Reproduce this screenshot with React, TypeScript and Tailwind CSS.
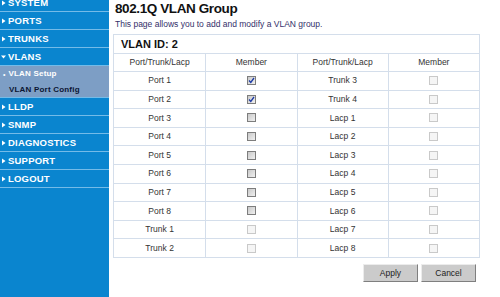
import React from 'react';

const font = { fontFamily: '"Liberation Sans", Arial, sans-serif' };

type MenuItem = { label: string; open?: boolean };

const topItems: MenuItem[] = [
  { label: 'SYSTEM' },
  { label: 'PORTS' },
  { label: 'TRUNKS' },
  { label: 'VLANS', open: true },
];

const bottomItems: MenuItem[] = [
  { label: 'LLDP' },
  { label: 'SNMP' },
  { label: 'DIAGNOSTICS' },
  { label: 'SUPPORT' },
  { label: 'LOGOUT' },
];

const rows: [string, 'on' | 'off' | 'dis', string][] = [
  ['Port 1', 'on', 'Trunk 3'],
  ['Port 2', 'on', 'Trunk 4'],
  ['Port 3', 'off', 'Lacp 1'],
  ['Port 4', 'off', 'Lacp 2'],
  ['Port 5', 'off', 'Lacp 3'],
  ['Port 6', 'off', 'Lacp 4'],
  ['Port 7', 'off', 'Lacp 5'],
  ['Port 8', 'off', 'Lacp 6'],
  ['Trunk 1', 'dis', 'Lacp 7'],
  ['Trunk 2', 'dis', 'Lacp 8'],
];

function Arrow({ open }: { open?: boolean }) {
  return (
    <svg width="5" height="6" viewBox="0 0 5 6" className="shrink-0">
      {open ? <polygon points="0,1.5 5,1.5 2.5,4.5" fill="#fff" /> : <polygon points="1,0.5 4.5,3 1,5.5" fill="#fff" />}
    </svg>
  );
}

function NavRow({ item }: { item: MenuItem }) {
  return (
    <div className="h-[18px] border-b border-[#74bbe8] flex items-center gap-[2px] pl-[1px]">
      <Arrow open={item.open} />
      <span className="text-[9.5px] font-bold text-white leading-none tracking-[0.2px]">{item.label}</span>
    </div>
  );
}

function Checkbox({ state }: { state: 'on' | 'off' | 'dis' }) {
  if (state === 'dis') {
    return <span className="inline-block w-[9px] h-[9px] border border-[#c9c9c9] bg-[#f5f5f5]" />;
  }
  return (
    <span className="inline-flex items-center justify-center w-[9px] h-[9px] border border-[#7d7d7d] bg-gradient-to-br from-[#c9c9c9] to-[#f0f0f0]">
      {state === 'on' && (
        <svg width="7" height="7" viewBox="0 0 7 7">
          <path d="M1 3.5 L2.8 5.5 L6 1" stroke="#1c3aa6" strokeWidth="1.3" fill="none" />
        </svg>
      )}
    </span>
  );
}

export default function App() {
  return (
    <div className="flex w-[500px] h-[297px] overflow-hidden bg-white" style={font}>
      {/* Sidebar, scrolled a little so SYSTEM is cut at the top */}
      <aside className="w-[109px] shrink-0 bg-[#0a85cf] overflow-hidden">
        <div className="-mt-[6px]">
          {topItems.map((it) => (
            <NavRow key={it.label} item={it} />
          ))}
          <div className="bg-[#7d9ec5] border-b border-[#74bbe8]">
            <div className="h-[16px] flex items-center pl-[3px] gap-[3px]">
              <span className="text-white text-[7px] leading-none">•</span>
              <span className="text-[8px] font-bold text-white leading-none tracking-[0.2px]">VLAN Setup</span>
            </div>
            <div className="h-[15px] flex items-center pl-[9px]">
              <span className="text-[8px] font-bold text-[#0b1533] leading-none tracking-[0.2px]">VLAN Port Config</span>
            </div>
          </div>
          {bottomItems.map((it) => (
            <NavRow key={it.label} item={it} />
          ))}
        </div>
      </aside>

      {/* Content */}
      <main className="w-[371px] pl-[4px] pt-[1px]">
        <h1 className="text-[13.5px] font-bold text-[#111] leading-[16px] tracking-[-0.4px] pl-[2px]">802.1Q VLAN Group</h1>
        <p className="text-[8.5px] text-[#34306a] leading-[12px] pl-[2px] mt-[1px]">
          This page allows you to add and modify a VLAN group.
        </p>

        <div className="mt-[4px] border border-[#d4deeb] text-[#333]">
          <div className="h-[18px] flex items-center pl-[7px] text-[11px] font-bold text-[#111]">VLAN ID: 2</div>
          <div className="grid grid-cols-4 h-[18px] border-t border-[#d4deeb] text-[8.5px]">
            <div className="flex items-center justify-center">Port/Trunk/Lacp</div>
            <div className="flex items-center justify-center border-l border-[#d4deeb]">Member</div>
            <div className="flex items-center justify-center border-l border-[#d4deeb]">Port/Trunk/Lacp</div>
            <div className="flex items-center justify-center border-l border-[#d4deeb]">Member</div>
          </div>
          {rows.map(([a, st, b]) => (
            <div key={a} className="grid grid-cols-4 h-[18.6px] border-t border-[#d4deeb] text-[8.5px]">
              <div className="flex items-center justify-center">{a}</div>
              <div className="flex items-center justify-center border-l border-[#d4deeb]">
                <Checkbox state={st} />
              </div>
              <div className="flex items-center justify-center border-l border-[#d4deeb]">{b}</div>
              <div className="flex items-center justify-center border-l border-[#d4deeb]">
                <Checkbox state="dis" />
              </div>
            </div>
          ))}
        </div>

        <div className="flex justify-end gap-[3px] mt-[6px] pr-[4px]">
          <button className="w-[55px] h-[18px] bg-[#cbcbcb] border border-t-[#ececec] border-l-[#ececec] border-b-[#7f7f7f] border-r-[#7f7f7f] text-[8.5px] text-[#222]">
            Apply
          </button>
          <button className="w-[55px] h-[18px] bg-[#cbcbcb] border border-t-[#ececec] border-l-[#ececec] border-b-[#7f7f7f] border-r-[#7f7f7f] text-[8.5px] text-[#222]">
            Cancel
          </button>
        </div>
      </main>
    </div>
  );
}
